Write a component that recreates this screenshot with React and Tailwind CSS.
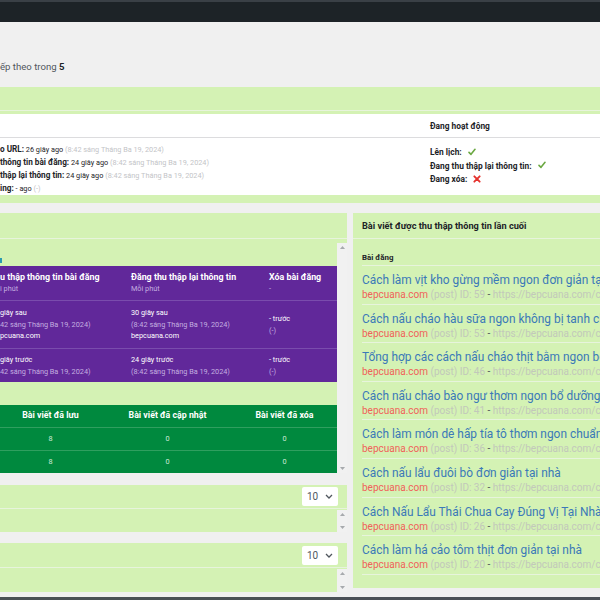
import React from 'react';

// tiny icons
const Check = () => (
  <svg viewBox="0 0 12 12" className="inline-block w-[8px] h-[8px] ml-[4px] -mt-[2px]">
    <path d="M1.5 6.5 L4.5 9.5 L10.5 2" fill="none" stroke="#6ba842" strokeWidth="2.4" strokeLinecap="round" strokeLinejoin="round" />
  </svg>
);

const Cross = () => (
  <svg viewBox="0 0 12 12" className="inline-block w-[8px] h-[8px] ml-[4px] -mt-[2px]">
    <path d="M2 2 L10 10 M10 2 L2 10" fill="none" stroke="#e5322d" strokeWidth="2.8" strokeLinecap="round" />
  </svg>
);

const Arrow = ({ up }) => (
  <svg width="5" height="3" viewBox="0 0 5 3">
    <path d={up ? 'M0 3 L2.5 0 L5 3Z' : 'M0 0 L2.5 3 L5 0Z'} fill="#a7aaad" />
  </svg>
);

const Scrollbar = () => (
  <div className="w-[10px] shrink-0 bg-[#f1f1f1] flex flex-col items-center justify-between py-[3px]">
    <Arrow up />
    <Arrow />
  </div>
);

const Select = () => (
  <div className="w-[36px] h-[19px] bg-white rounded-[2px] flex items-center justify-between pl-[5px] pr-[5px] text-[10px] text-[#50575e]">
    <span>10</span>
    <svg width="8" height="5" viewBox="0 0 8 5">
      <path d="M1 1 L4 4 L7 1" fill="none" stroke="#50575e" strokeWidth="1.3" />
    </svg>
  </div>
);

const posts = [
  ['Cách làm vịt kho gừng mềm ngon đơn giản tại nhà', 59, 'cach-lam-vit-kho-gung-mem-ngon'],
  ['Cách nấu cháo hàu sữa ngon không bị tanh cho bé', 53, 'cach-nau-chao-hau-sua-ngon'],
  ['Tổng hợp các cách nấu cháo thịt bằm ngon bổ dưỡng', 46, 'cach-nau-chao-thit-bam'],
  ['Cách nấu cháo bào ngư thơm ngon bổ dưỡng cho cả nhà', 41, 'cach-nau-chao-bao-ngu'],
  ['Cách làm món dê hấp tía tô thơm ngon chuẩn vị', 36, 'cach-lam-mon-de-hap-tia-to'],
  ['Cách nấu lẩu đuôi bò đơn giản tại nhà', 32, 'cach-nau-lau-duoi-bo'],
  ['Cách Nấu Lẩu Thái Chua Cay Đúng Vị Tại Nhà', 26, 'cach-nau-lau-thai-chua-cay'],
  ['Cách làm há cảo tôm thịt đơn giản tại nhà', 20, 'cach-lam-ha-cao-tom-thit'],
];

const Date = () => <span className="text-[#c3c4c7]">(8:42 sáng Tháng Ba 19, 2024)</span>;

export default function App() {
  return (
    <div className="w-[600px] h-[600px] overflow-hidden bg-[#f0f0f0] text-[7.3px] text-[#1d2327] font-['Roboto',sans-serif]">
      <div className="h-[22px] bg-[#1d2327] border-t-2 border-[#3a4046]" />

      <div className="h-[65px] pt-[39px] leading-[12px] text-[9.6px] text-[#50575e] whitespace-nowrap">
        ếp theo trong <b className="text-[#1d2327]">5</b>
      </div>

      {/* status panel */}
      <div className="bg-[#d4f2b4] pb-[8px]">
        <div className="h-[24px] border-b border-[#e7f4dc]" />
        <div className="pt-[3px]">
          <div className="bg-white h-[81px]">
            <div className="h-[24px] flex border-b border-[#dcdcde]">
              <div className="w-[430px]" />
              <div className="pt-[2px] flex items-center font-bold text-[8.4px]">Đang hoạt động</div>
            </div>
            <div className="flex">
              <div className="w-[430px] pt-[5px] leading-[12px] whitespace-nowrap">
                <div><b className="text-[8.2px]">o URL:</b> 26 giây ago <Date /></div>
                <div><b className="text-[8.2px]">thông tin bài đăng:</b> 24 giây ago <Date /></div>
                <div><b className="text-[8.2px]">thập lại thông tin:</b> 24 giây ago <Date /></div>
                <div><b className="text-[8.2px]">ing:</b> - ago <span className="text-[#c3c4c7]">(-)</span></div>
              </div>
              <div className="pt-[8px] leading-[13.5px] whitespace-nowrap font-bold text-[8.4px]">
                <div>Lên lịch: <Check /></div>
                <div>Đang thu thập lại thông tin: <Check /></div>
                <div>Đang xóa: <Cross /></div>
              </div>
            </div>
          </div>
        </div>
      </div>

      <div className="mt-[10px] flex gap-[6px] items-start">
        {/* left column */}
        <div className="w-[347px] shrink-0 flex flex-col">
          <div className="bg-[#d4f2b4]">
            <div className="h-[26px] border-b border-[#e7f4dc]" />
            <div className="pt-[4px]">
              <div className="h-[230px] flex">
                <div className="flex-1 min-w-0 overflow-hidden flex flex-col whitespace-nowrap">
                  <div className="h-[23px] flex items-end pb-[3px]">
                    <span className="w-[2px] h-[5px] bg-[#2a9bb0]" />
                  </div>

                  <div className="bg-[#61289a] text-white leading-[11.5px]">
                    <div className="h-[35px] grid grid-cols-[131px_138px_1fr] items-center border-b border-[#7a4cad]">
                      <div><div className="font-bold text-[8.9px]">u thập thông tin bài đăng</div><div className="text-[#c4aee0]">i phút</div></div>
                      <div><div className="font-bold text-[8.9px]">Đăng thu thập lại thông tin</div><div className="text-[#c4aee0]">Mỗi phút</div></div>
                      <div><div className="font-bold text-[8.9px]">Xóa bài đăng</div><div className="text-[#c4aee0]">-</div></div>
                    </div>
                    <div className="h-[48px] grid grid-cols-[131px_138px_1fr] items-center border-b border-[#7a4cad]">
                      <div><div>giây sau</div><div className="text-[#c4aee0]">42 sáng Tháng Ba 19, 2024)</div><div>pcuana.com</div></div>
                      <div><div>30 giây sau</div><div className="text-[#c4aee0]">(8:42 sáng Tháng Ba 19, 2024)</div><div>bepcuana.com</div></div>
                      <div><div>- trước</div><div className="text-[#c4aee0]">(-)</div></div>
                    </div>
                    <div className="h-[33px] grid grid-cols-[131px_138px_1fr] items-center">
                      <div><div>giây trước</div><div className="text-[#c4aee0]">42 sáng Tháng Ba 19, 2024)</div></div>
                      <div><div>24 giây trước</div><div className="text-[#c4aee0]">(8:42 sáng Tháng Ba 19, 2024)</div></div>
                      <div><div>- trước</div><div className="text-[#c4aee0]">(-)</div></div>
                    </div>
                  </div>

                  <div className="h-[23px]" />

                  <div className="bg-[#00893e] text-white -ml-[8px] w-[351px]">
                    <div className="h-[23px] grid grid-cols-3 items-center text-center font-bold text-[8.8px] border-b border-[#2f9f5f]">
                      <div>Bài viết đã lưu</div>
                      <div>Bài viết đã cập nhật</div>
                      <div>Bài viết đã xóa</div>
                    </div>
                    <div className="h-[23px] grid grid-cols-3 items-center text-center text-[#cfe9d8] border-b border-[#2f9f5f]">
                      <div>8</div><div>0</div><div>0</div>
                    </div>
                    <div className="h-[22px] grid grid-cols-3 items-center text-center text-[#cfe9d8]">
                      <div>8</div><div>0</div><div>0</div>
                    </div>
                  </div>
                </div>
                <Scrollbar />
              </div>
            </div>
          </div>

          <div className="mt-[12px] bg-[#d4f2b4]">
            <div className="h-[24px] flex items-center justify-end pr-[9px] border-b border-[#e7f4dc]">
              <Select />
            </div>
            <div className="h-[23px] flex justify-end pt-[1px]">
              <Scrollbar />
            </div>
          </div>

          <div className="mt-[11px] bg-[#d4f2b4]">
            <div className="h-[25px] flex items-center justify-end pr-[9px] border-b border-[#e7f4dc]">
              <Select />
            </div>
            <div className="h-[24px] flex justify-end pt-[1px]">
              <Scrollbar />
            </div>
          </div>
        </div>

        {/* right column */}
        <div className="flex-1 min-w-0 h-[375px] bg-[#d4f2b4] overflow-hidden whitespace-nowrap">
          <div className="h-[26px] flex items-center pl-[9px] font-bold text-[9.2px] border-b border-[#e7f4dc]">
            Bài viết được thu thập thông tin lần cuối
          </div>
          <div className="pl-[9px] pt-[11px]">
            <div className="h-[16px] leading-[15px] font-bold text-[7.9px] border-b border-[#e7f4dc]">Bài đăng</div>
            {posts.map(([title, id, slug]) => (
              <div key={id} className="h-[38.6px] pt-[6px] border-b border-[#e7f4dc]">
                <div className="h-[17px] leading-[17px] text-[11.9px] text-[#3b79b8]">{title}</div>
                <div className="h-[11px] leading-[11px] text-[10px]">
                  <span className="text-[#f0625a]">bepcuana.com</span>
                  <span className="text-[#c2c8bb]"> (post) </span>
                  <span className="text-[#c2c8bb]">ID: {id}</span>
                  <span className="text-[#50575e]"> - </span>
                  <span className="text-[#c2c8bb]">https://bepcuana.com/{slug}/</span>
                </div>
              </div>
            ))}
          </div>
        </div>
      </div>

      <div className="mt-[5px] h-[3px] bg-[#4a5056]" />
    </div>
  );
}
